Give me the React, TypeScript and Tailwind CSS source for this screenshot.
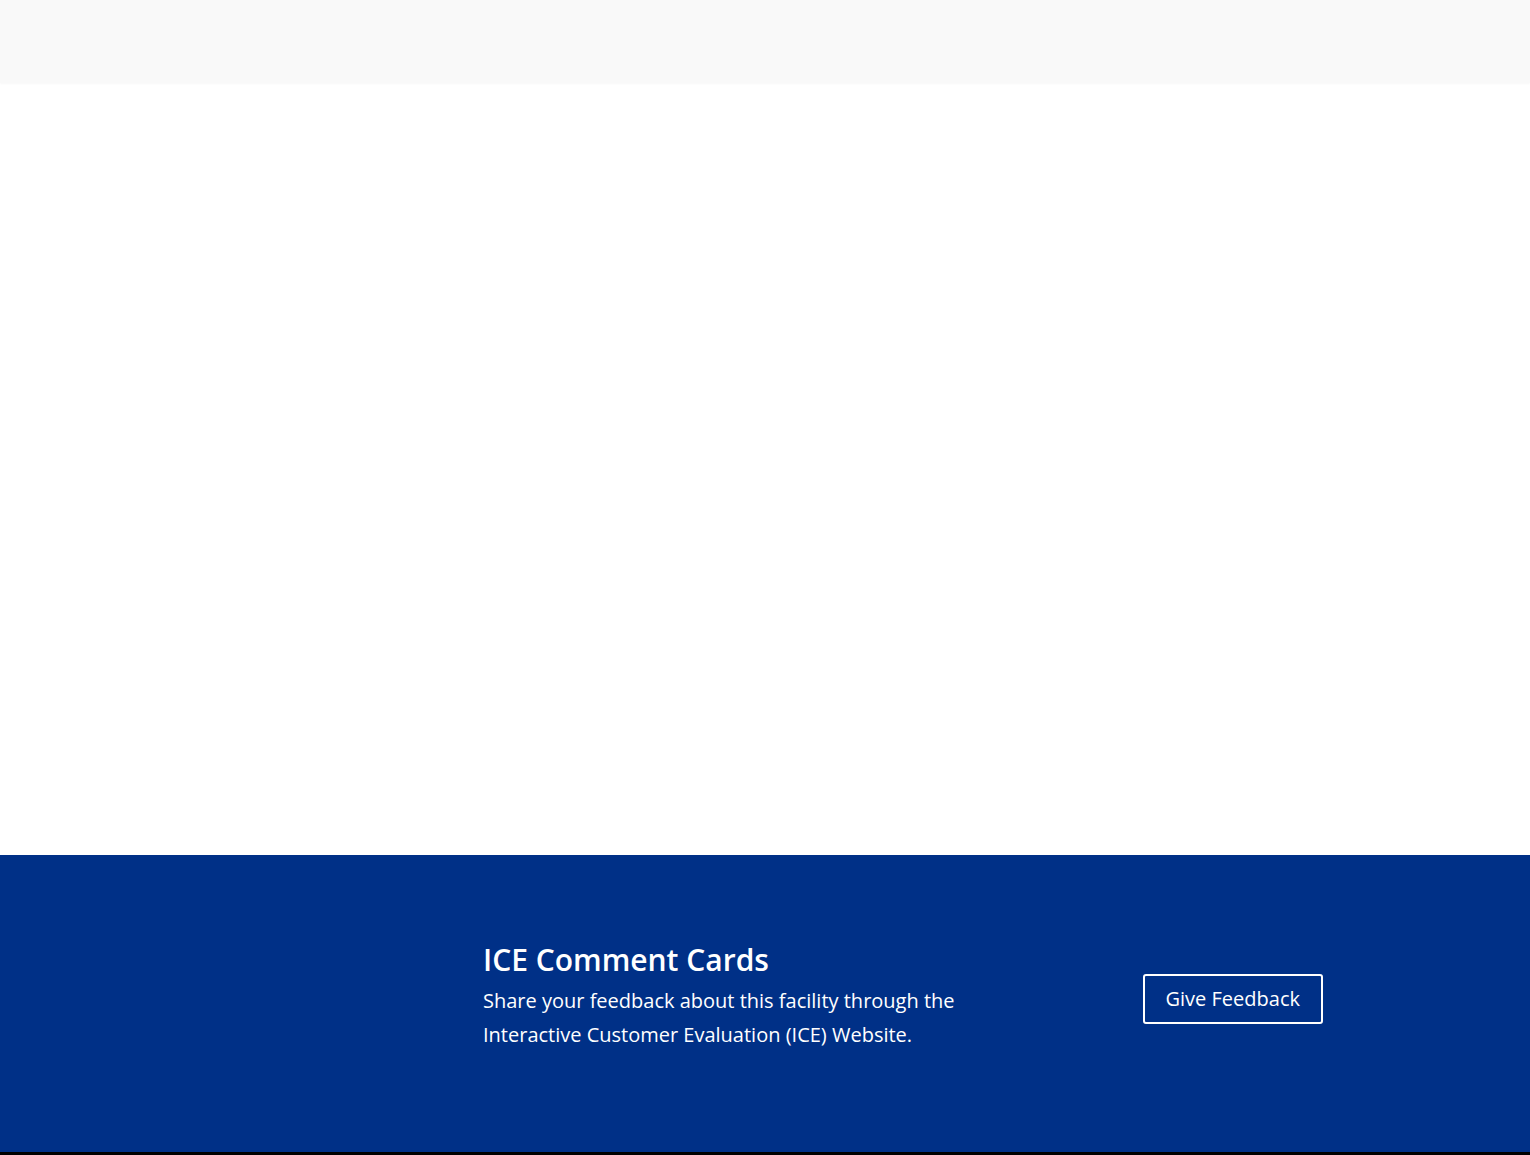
const App = () => {
  return (
    <div className="min-h-[1155px] flex flex-col bg-white font-['Open_Sans',sans-serif]">
      {/* top bar */}
      <header className="h-[83px] bg-[#f9f9f9] shadow-[0_1px_2px_rgba(0,0,0,0.03)]" />

      {/* page body */}
      <main className="h-[772px]" />

      {/* feedback banner */}
      <section className="h-[297px] bg-[#003087] flex items-center">
        <div className="w-[1116px] mx-auto flex items-center pb-[16px]">
          <div className="w-[276px] shrink-0" />
          <div className="flex-1 text-white">
            <h2 className="text-[30px] leading-[40px] font-semibold mb-[4px]">ICE Comment Cards</h2>
            <p className="text-[20px] leading-[34px] max-w-[500px]">
              Share your feedback about this facility through the Interactive Customer Evaluation (ICE) Website.
            </p>
          </div>
          <a
            href="#"
            className="shrink-0 mt-[6px] h-[50px] px-[21px] flex items-center border-2 border-white rounded-[3px] text-white text-[20px]"
          >
            Give Feedback
          </a>
        </div>
      </section>

      <footer className="h-[3px] bg-black" />
    </div>
  );
};

export default App;
